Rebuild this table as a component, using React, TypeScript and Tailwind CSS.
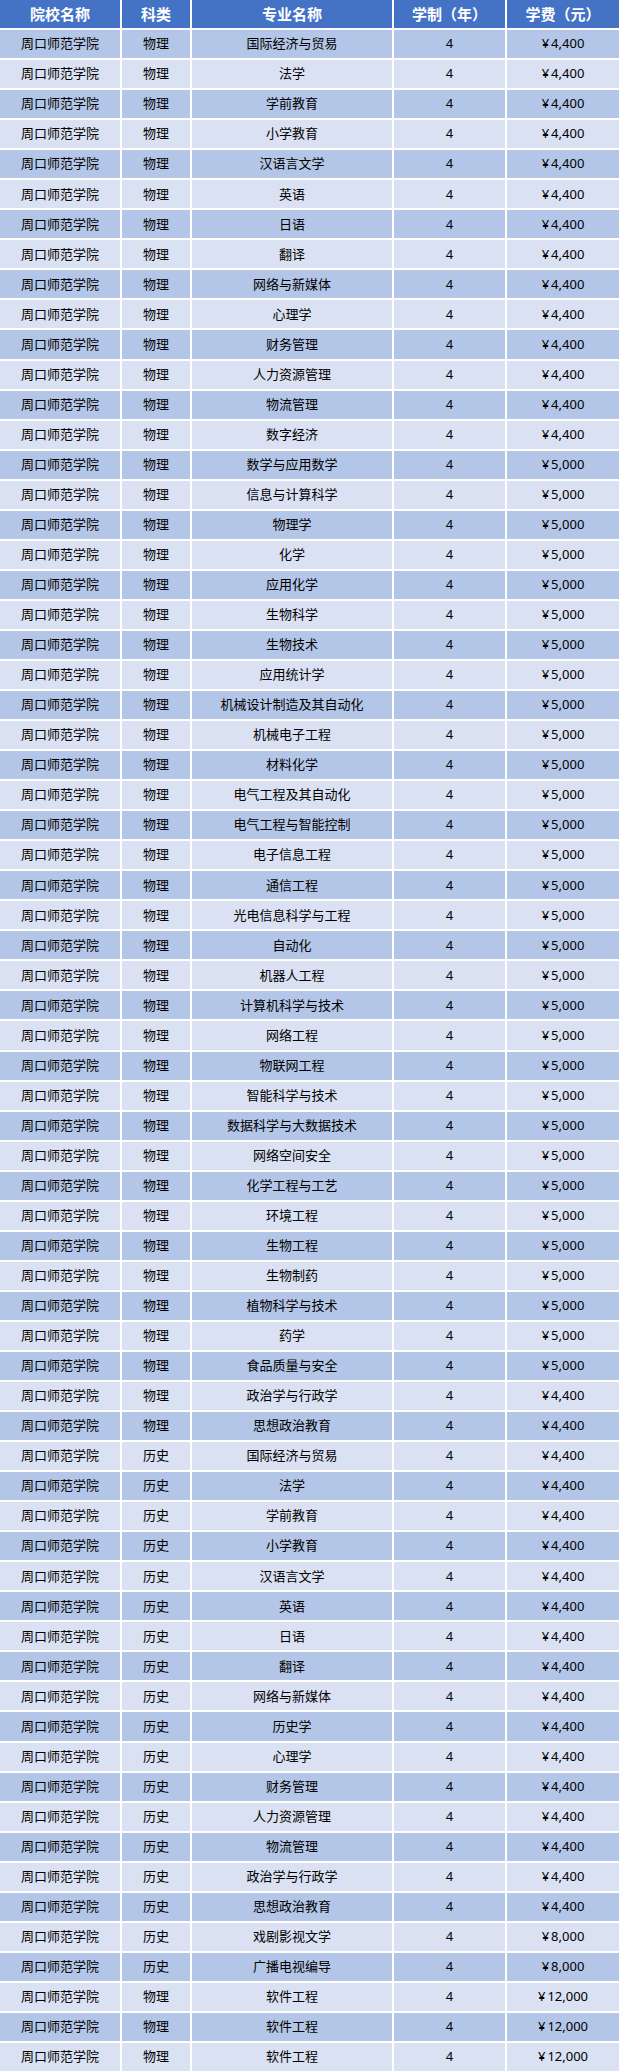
const school = '周口师范学院';

// [科类, 专业名称, 学费]
const rows: [string, string, string][] = [
  ['物理', '国际经济与贸易', '4,400'],
  ['物理', '法学', '4,400'],
  ['物理', '学前教育', '4,400'],
  ['物理', '小学教育', '4,400'],
  ['物理', '汉语言文学', '4,400'],
  ['物理', '英语', '4,400'],
  ['物理', '日语', '4,400'],
  ['物理', '翻译', '4,400'],
  ['物理', '网络与新媒体', '4,400'],
  ['物理', '心理学', '4,400'],
  ['物理', '财务管理', '4,400'],
  ['物理', '人力资源管理', '4,400'],
  ['物理', '物流管理', '4,400'],
  ['物理', '数字经济', '4,400'],
  ['物理', '数学与应用数学', '5,000'],
  ['物理', '信息与计算科学', '5,000'],
  ['物理', '物理学', '5,000'],
  ['物理', '化学', '5,000'],
  ['物理', '应用化学', '5,000'],
  ['物理', '生物科学', '5,000'],
  ['物理', '生物技术', '5,000'],
  ['物理', '应用统计学', '5,000'],
  ['物理', '机械设计制造及其自动化', '5,000'],
  ['物理', '机械电子工程', '5,000'],
  ['物理', '材料化学', '5,000'],
  ['物理', '电气工程及其自动化', '5,000'],
  ['物理', '电气工程与智能控制', '5,000'],
  ['物理', '电子信息工程', '5,000'],
  ['物理', '通信工程', '5,000'],
  ['物理', '光电信息科学与工程', '5,000'],
  ['物理', '自动化', '5,000'],
  ['物理', '机器人工程', '5,000'],
  ['物理', '计算机科学与技术', '5,000'],
  ['物理', '网络工程', '5,000'],
  ['物理', '物联网工程', '5,000'],
  ['物理', '智能科学与技术', '5,000'],
  ['物理', '数据科学与大数据技术', '5,000'],
  ['物理', '网络空间安全', '5,000'],
  ['物理', '化学工程与工艺', '5,000'],
  ['物理', '环境工程', '5,000'],
  ['物理', '生物工程', '5,000'],
  ['物理', '生物制药', '5,000'],
  ['物理', '植物科学与技术', '5,000'],
  ['物理', '药学', '5,000'],
  ['物理', '食品质量与安全', '5,000'],
  ['物理', '政治学与行政学', '4,400'],
  ['物理', '思想政治教育', '4,400'],
  ['历史', '国际经济与贸易', '4,400'],
  ['历史', '法学', '4,400'],
  ['历史', '学前教育', '4,400'],
  ['历史', '小学教育', '4,400'],
  ['历史', '汉语言文学', '4,400'],
  ['历史', '英语', '4,400'],
  ['历史', '日语', '4,400'],
  ['历史', '翻译', '4,400'],
  ['历史', '网络与新媒体', '4,400'],
  ['历史', '历史学', '4,400'],
  ['历史', '心理学', '4,400'],
  ['历史', '财务管理', '4,400'],
  ['历史', '人力资源管理', '4,400'],
  ['历史', '物流管理', '4,400'],
  ['历史', '政治学与行政学', '4,400'],
  ['历史', '思想政治教育', '4,400'],
  ['历史', '戏剧影视文学', '8,000'],
  ['历史', '广播电视编导', '8,000'],
  ['物理', '软件工程', '12,000'],
  ['物理', '软件工程', '12,000'],
  ['物理', '软件工程', '12,000'],
];

const headers = ['院校名称', '科类', '专业名称', '学制（年）', '学费（元）'];

const App = () => {
  return (
    <div
      className="grid h-[2071px] w-[619px] grid-cols-[120px_68px_200px_111px_1fr] auto-rows-fr gap-[2px] bg-white text-[13px] text-black"
      style={{ fontFamily: '"Noto Sans", "Noto Sans CJK SC", sans-serif' }}
    >
      {headers.map((h) => (
        <div
          key={h}
          className="flex items-center justify-center bg-[#4472c4] text-[15px] font-bold text-white"
        >
          {h}
        </div>
      ))}

      {rows.map(([kind, major, fee], i) => {
        const bg = i % 2 === 0 ? 'bg-[#b4c6e7]' : 'bg-[#d9e1f2]';
        return (
          <>
            <div key={`${i}-a`} className={`flex items-center justify-center ${bg}`}>{school}</div>
            <div key={`${i}-b`} className={`flex items-center justify-center ${bg}`}>{kind}</div>
            <div key={`${i}-c`} className={`flex items-center justify-center ${bg}`}>{major}</div>
            <div key={`${i}-d`} className={`flex items-center justify-center ${bg}`}>4</div>
            <div key={`${i}-e`} className={`flex items-center justify-center ${bg}`}>
              <span className="mr-[2px]">¥</span>
              {fee}
            </div>
          </>
        );
      })}
    </div>
  );
};

export default App;
